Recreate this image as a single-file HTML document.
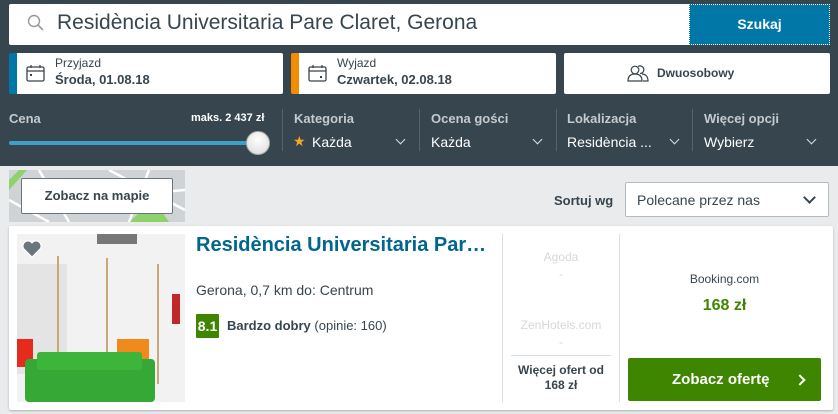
<!DOCTYPE html>
<html><head><meta charset="utf-8"><style>
*{box-sizing:border-box;margin:0;padding:0}
body{width:838px;height:414px;overflow:hidden;background:#e9ebec;font-family:"Liberation Sans",Arial,sans-serif;position:relative}
.hdr{position:absolute;left:0;top:0;width:838px;height:166px;background:#37454e}
.abs{position:absolute}
.box{background:#fff;border-radius:2px}
.lbl{color:#c4cbd0;font-weight:bold;font-size:13px}
.val{color:#fff;font-size:14px}
.div{position:absolute;top:109px;width:1px;height:42px;background:#56636b}
.chev{position:absolute;width:7px;height:7px;border-right:1.6px solid #dde;border-bottom:1.6px solid #dde;transform:rotate(45deg)}
</style></head><body>
<div class="hdr">
 <div class="abs box" style="left:9px;top:4px;width:680px;height:41px;border-radius:2px 0 0 2px"></div>
 <svg class="abs" style="left:27px;top:14px" width="17" height="17" viewBox="0 0 17 17"><circle cx="7" cy="7" r="5.5" fill="none" stroke="#999" stroke-width="1.4"/><path d="M11 11l5 5" stroke="#999" stroke-width="1.6"/></svg>
 <div class="abs" style="left:57px;top:11px;font-size:21px;color:#37454e">Residència Universitaria Pare Claret, Gerona</div>
 <div class="abs" style="left:689px;top:4px;width:141px;height:41px;background:#0077a7;border:1px dotted #fff;color:#fff;font-weight:bold;font-size:14px;text-align:center;line-height:39px">Szukaj</div>

 <div class="abs box" style="left:9px;top:53px;width:274px;height:41px;border-left:8px solid #0077a7"></div>
 <svg class="abs" style="left:26px;top:65px" width="19" height="17" viewBox="0 0 19 17"><rect x="1" y="2" width="17" height="14" rx="1.5" fill="none" stroke="#37454e" stroke-width="1.3"/><path d="M1 6h17M5 0v3M14 0v3" stroke="#37454e" stroke-width="1.3"/><rect x="4" y="9" width="2" height="2" fill="#37454e"/></svg>
 <div class="abs" style="left:55px;top:56px;font-size:12px;color:#37454e">Przyjazd</div>
 <div class="abs" style="left:55px;top:72px;font-size:13px;font-weight:bold;color:#37454e">Środa, 01.08.18</div>

 <div class="abs box" style="left:291px;top:53px;width:265px;height:41px;border-left:8px solid #f28c00"></div>
 <svg class="abs" style="left:308px;top:65px" width="19" height="17" viewBox="0 0 19 17"><rect x="1" y="2" width="17" height="14" rx="1.5" fill="none" stroke="#37454e" stroke-width="1.3"/><path d="M1 6h17M5 0v3M14 0v3" stroke="#37454e" stroke-width="1.3"/><rect x="12" y="11" width="2" height="2" fill="#37454e"/></svg>
 <div class="abs" style="left:337px;top:56px;font-size:12px;color:#37454e">Wyjazd</div>
 <div class="abs" style="left:337px;top:72px;font-size:13px;font-weight:bold;color:#37454e">Czwartek, 02.08.18</div>

 <div class="abs box" style="left:564px;top:53px;width:266px;height:41px"></div>
 <svg class="abs" style="left:627px;top:65px" width="22" height="17" viewBox="0 0 22 17"><circle cx="8" cy="5" r="3.8" fill="none" stroke="#37454e" stroke-width="1.2"/><path d="M1 16c0-5 3-7 7-7s7 2 7 7z" fill="none" stroke="#37454e" stroke-width="1.2"/><path d="M11 1.5a3.8 3.8 0 1 1 2 7M15 9c3 0 6 2 6 7h-5" fill="none" stroke="#37454e" stroke-width="1.2"/></svg>
 <div class="abs" style="left:657px;top:66px;font-size:12px;font-weight:bold;color:#37454e">Dwuosobowy</div>

 <div class="abs lbl" style="left:9px;top:111px">Cena</div>
 <div class="abs" style="left:191px;top:112px;font-size:11px;color:#fff;font-weight:bold">maks. 2 437 zł</div>
 <div class="abs" style="left:9px;top:141px;width:250px;height:4px;background:#3aa0c8;border-radius:2px"></div>
 <div class="abs" style="left:246px;top:131px;width:24px;height:24px;border-radius:50%;background:radial-gradient(circle at 50% 35%,#fff,#d8d8d8);border:1px solid #aaa"></div>
 <div class="div" style="left:282px"></div>
 <div class="abs lbl" style="left:294px;top:111px">Kategoria</div>
 <div class="abs" style="left:293px;top:133px;color:#f5a623;font-size:14px">★</div>
 <div class="abs val" style="left:312px;top:134px">Każda</div>
 <div class="chev" style="left:397px;top:136px"></div>
 <div class="div" style="left:419px"></div>
 <div class="abs lbl" style="left:431px;top:111px">Ocena gości</div>
 <div class="abs val" style="left:431px;top:134px">Każda</div>
 <div class="chev" style="left:534px;top:136px"></div>
 <div class="div" style="left:556px"></div>
 <div class="abs lbl" style="left:567px;top:111px">Lokalizacja</div>
 <div class="abs val" style="left:567px;top:134px">Residència ...</div>
 <div class="chev" style="left:671px;top:136px"></div>
 <div class="div" style="left:692px"></div>
 <div class="abs lbl" style="left:704px;top:111px">Więcej opcji</div>
 <div class="abs val" style="left:704px;top:134px">Wybierz</div>
 <div class="chev" style="left:808px;top:136px"></div>
</div>

<svg class="abs" style="left:9px;top:170px" width="176" height="52" viewBox="0 0 176 52"><rect width="176" height="52" fill="#cfd3d6"/><path d="M0 10 L10 0 L18 0 L0 20Z M120 52 L145 30 L160 52Z" fill="#8fd16a"/><path d="M0 30 L40 52 M30 0 L60 52 M100 0 L176 40 M140 0 L120 52 M60 30 L176 20" stroke="#fff" stroke-width="2.5" fill="none"/></svg>
<div class="abs" style="left:21px;top:178px;width:152px;height:36px;background:#fff;border:1px solid #6b757c;border-radius:2px;text-align:center;line-height:34px;font-weight:bold;font-size:13px;color:#37454e">Zobacz na mapie</div>

<div class="abs" style="left:554px;top:193px;font-weight:bold;font-size:13px;color:#37454e">Sortuj wg</div>
<div class="abs" style="left:625px;top:182px;width:204px;height:35px;background:#fff;border:1px solid #b5bcc1;border-radius:2px"></div>
<div class="abs" style="left:637px;top:192px;font-size:14px;color:#37454e">Polecane przez nas</div>
<div class="chev" style="left:805px;top:193px;width:9px;height:9px;border-color:#37454e;border-width:2px"></div>

<div class="abs" style="left:9px;top:226px;width:824px;height:184px;background:#fff;border-radius:2px;box-shadow:0 1px 2px rgba(0,0,0,.25)"></div>
<svg class="abs" style="left:17px;top:234px" width="168" height="168" viewBox="0 0 168 168"><rect width="168" height="168" fill="#f2f2f2"/><rect x="0" y="30" width="50" height="110" fill="#e4e4e4"/><rect x="80" y="0" width="40" height="10" fill="#777"/><rect x="40" y="22" width="2" height="120" fill="#c8a77a"/><rect x="89" y="24" width="2" height="110" fill="#c8a77a"/><rect x="140" y="30" width="2" height="120" fill="#c8a77a"/><rect x="100" y="105" width="32" height="30" fill="#f08a1c"/><rect x="0" y="105" width="16" height="28" fill="#e52b1c"/><rect x="155" y="60" width="8" height="30" fill="#c0282b"/><rect x="8" y="125" width="130" height="43" rx="4" fill="#35a835"/><rect x="20" y="118" width="105" height="18" rx="3" fill="#3db53b"/></svg>
<svg class="abs" style="left:22px;top:240px" width="20" height="18" viewBox="0 0 20 18"><path d="M10 17 L2 9 A4.8 4.8 0 0 1 10 3 A4.8 4.8 0 0 1 18 9Z" fill="#6b757c" stroke="#fff" stroke-width="1"/></svg>

<div class="abs" style="left:196px;top:234px;font-size:20px;font-weight:bold;color:#00668e">Residència Universitaria Par…</div>
<div class="abs" style="left:196px;top:282px;font-size:14px;color:#37454e">Gerona, 0,7 km do: Centrum</div>
<div class="abs" style="left:196px;top:314px;width:23px;height:24px;background:#3f8600;border-radius:1px;color:#fff;font-weight:bold;font-size:14px;text-align:center;line-height:24px">8.1</div>
<div class="abs" style="left:227px;top:318px;font-size:13px;color:#37454e"><b>Bardzo dobry</b> (opinie: 160)</div>

<div class="abs" style="left:502px;top:234px;width:1px;height:168px;background:#dcdfe1"></div>
<div class="abs" style="left:619px;top:234px;width:1px;height:168px;background:#dcdfe1"></div>
<div class="abs" style="left:503px;top:249px;width:116px;text-align:center;font-size:12px;color:#d5d8da;line-height:17px">Agoda<br>-<br><br><br>ZenHotels.com<br>-</div>
<div class="abs" style="left:511px;top:355px;width:100px;height:1px;background:#dcdfe1"></div>
<div class="abs" style="left:503px;top:363px;width:116px;text-align:center;font-size:12px;font-weight:bold;color:#37454e;line-height:15px">Więcej ofert od<br>168 zł</div>

<div class="abs" style="left:628px;top:272px;width:193px;text-align:center;font-size:12px;color:#37454e">Booking.com</div>
<div class="abs" style="left:628px;top:297px;width:193px;text-align:center;font-size:16px;font-weight:bold;color:#3f8600">168 zł</div>
<div class="abs" style="left:628px;top:358px;width:193px;height:43px;background:#3f8600;border-radius:2px;color:#fff;font-weight:bold;font-size:15px;line-height:43px;padding-left:44px">Zobacz ofertę</div>
<div class="chev" style="left:796px;top:376px;width:8px;height:8px;border-color:#fff;border-width:2px;transform:rotate(-45deg)"></div>
</body></html>
